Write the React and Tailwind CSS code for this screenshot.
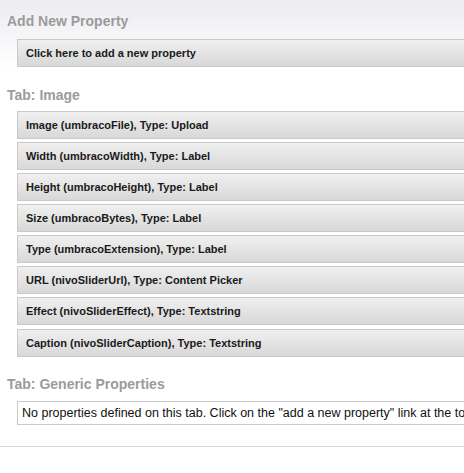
export default function App() {
  const rows = [
    "Image (umbracoFile), Type: Upload",
    "Width (umbracoWidth), Type: Label",
    "Height (umbracoHeight), Type: Label",
    "Size (umbracoBytes), Type: Label",
    "Type (umbracoExtension), Type: Label",
    "URL (nivoSliderUrl), Type: Content Picker",
    "Effect (nivoSliderEffect), Type: Textstring",
    "Caption (nivoSliderCaption), Type: Textstring",
  ];
  const font = { fontFamily: '"Trebuchet MS", "Liberation Sans", Arial, sans-serif' };
  const bar =
    "ml-[17px] mr-[-40px] h-[28px] flex items-center pl-[8px] border border-[#c9c9c9] bg-gradient-to-b from-[#f0f0f0] to-[#d8d8d8] text-[11px] font-bold text-[#1a1a1a] whitespace-nowrap";
  return (
    <div className="w-[464px] h-[473px] overflow-hidden bg-white" style={font}>
      <div className="bg-gradient-to-b from-[#ececf1] to-white pt-[12px] pb-[1px]">
        <h2 className="ml-[7px] text-[14px] font-bold text-[#9b9b9b] leading-[18px]">Add New Property</h2>
        <div className={bar + " mt-[9px]"}>Click here to add a new property</div>
      </div>
      <h2 className="ml-[7px] mt-[18px] text-[14px] font-bold text-[#9b9b9b] leading-[18px]">Tab: Image</h2>
      <div className="mt-[7px] flex flex-col gap-[3px]">
        {rows.map((r, i) => (
          <div key={r} className={bar + (i === 7 ? " mt-[1px]" : "")}>{r}</div>
        ))}
      </div>
      <h2 className="ml-[7px] mt-[18px] text-[14px] font-bold text-[#9b9b9b] leading-[18px]">Tab: Generic Properties</h2>
      <div className="ml-[17px] mr-[-200px] mt-[8px] h-[24px] flex items-center pl-[4px] border border-[#c9c9c9] bg-white text-[12.5px] text-[#111] whitespace-nowrap">
        No properties defined on this tab. Click on the "add a new property" link at the top to create a new property.
      </div>
      <div className="mt-[21px] border-t border-[#d9d9d9]"></div>
    </div>
  );
}
